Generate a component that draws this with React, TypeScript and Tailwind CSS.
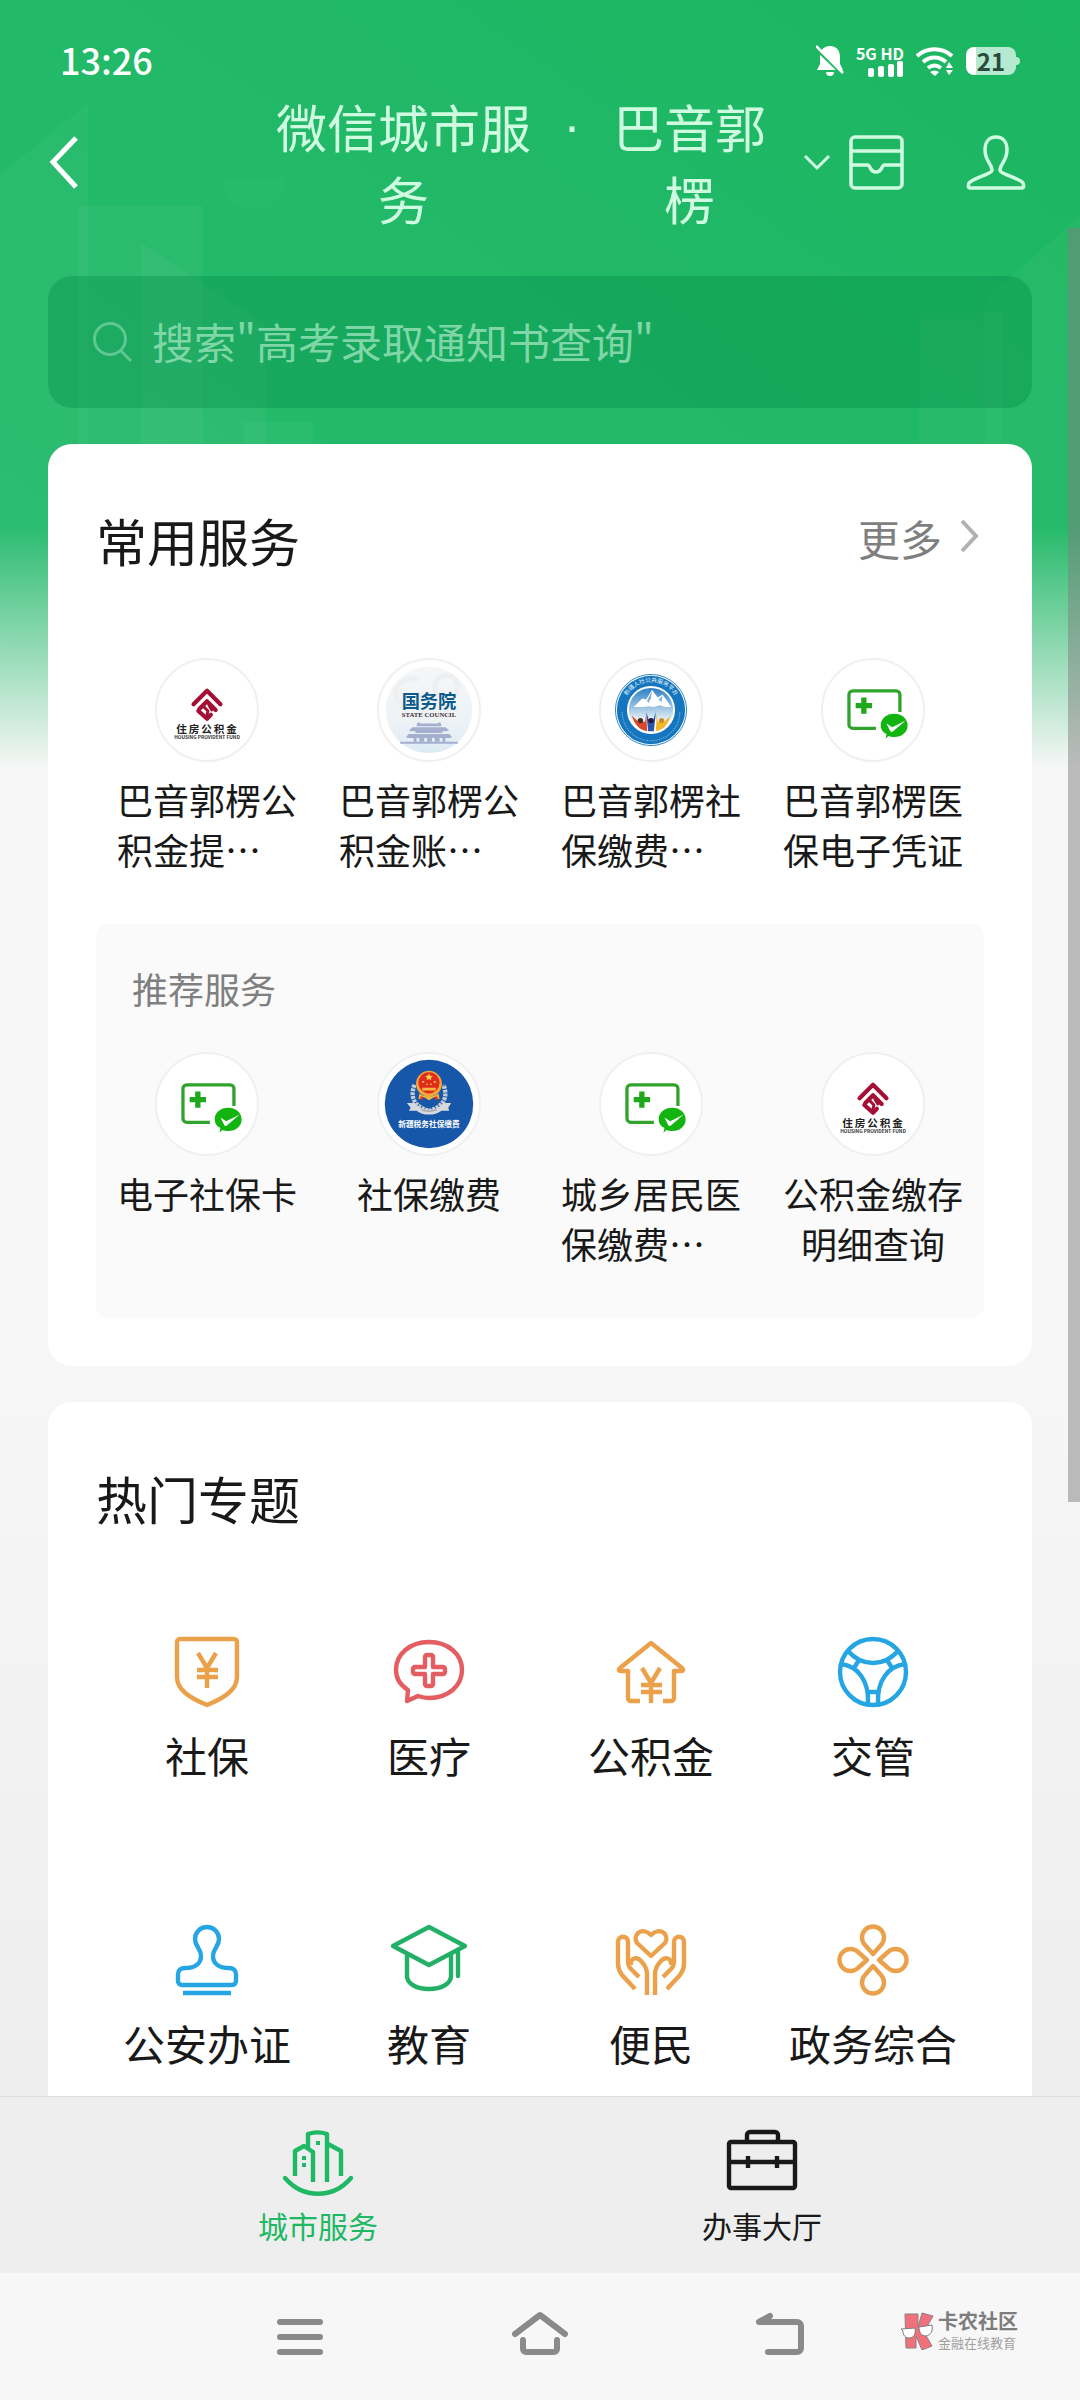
import React, { useState } from "react";

interface IconProps {
  className?: string;
}

interface Service {
  name: string;
  logo: React.ReactNode;
  truncated?: boolean;
}

interface Topic {
  name: string;
  icon: React.ReactNode;
}

const YEN = (
  <>
    <path d="M33 23l9 15 9-15M42 38v20M32 40h21M32 47h21" strokeLinecap="butt" />
  </>
);

/* ---------- service logos, all on a 104 grid ---------- */

function HousingFundLogo() {
  return (
    <svg viewBox="0 0 104 104" className="w-full h-full">
      <g fill="none" stroke="#a50f35" strokeWidth="4.4" strokeLinecap="round" strokeLinejoin="round">
        <path d="M38 46l14-14 14 14" />
        <path d="M44 51l8-8 9 9" />
        <path d="M43 53l9 8 4-4" />
        <path d="M49 49l4 4-1 4" strokeWidth="3" />
        <path d="M54 47l3 5" strokeWidth="3" />
      </g>
      <text x="20 33 46 59 72" y="76" fontSize="11" fontWeight="700" fill="#222">住房公积金</text>
      <text x="52" y="82" fontSize="5" fontWeight="700" fill="#333" textAnchor="middle">HOUSING PROVIDENT FUND</text>
    </svg>
  );
}

function StateCouncilLogo() {
  return (
    <svg viewBox="0 0 104 104" className="w-full h-full">
      <defs>
        <linearGradient id="council" x1="0" y1="0" x2="0" y2="1">
          <stop offset="0" stopColor="#f5f6f7" />
          <stop offset="0.6" stopColor="#eff3f6" />
          <stop offset="1" stopColor="#dcebf4" />
        </linearGradient>
      </defs>
      <circle cx="52" cy="52" r="45" fill="url(#council)" />
      <g fill="none" stroke="#edeff1" strokeWidth="5">
        <path d="M40 22c-8-6-20 0-22 10s6 18 16 17" />
        <circle cx="70" cy="28" r="12" />
      </g>
      <text x="52" y="50" fontSize="19" fontWeight="700" fill="#0b5a8a" textAnchor="middle">国务院</text>
      <text x="52" y="59" fontSize="7" fontWeight="700" fill="#3d2f35" textAnchor="middle" className="font-['Liberation_Serif',serif]">STATE COUNCIL</text>
      <g fill="#a3afcd">
        <path d="M40 65h2l1 1h18l1-1h2l1 4h-26zM35 70h34l4 3-3 1H34l-3-1zM38 74h28v2H38zM31 77h42l3 3-2 1H30l-2-1zM22 85h60v2H22z" />
        <path d="M36 81h3v4h-3zM42 81h5v4h-5zM50 81h5v4h-5zM58 81h5v4h-5zM66 81h3v4h-3z" />
      </g>
    </svg>
  );
}

function SocialSecurityLogo() {
  return (
    <svg viewBox="0 0 104 104" className="w-full h-full">
      <defs>
        <linearGradient id="sky" x1="0" y1="0" x2="0" y2="1">
          <stop offset="0" stopColor="#2a7fc4" />
          <stop offset="0.5" stopColor="#a9cce6" />
          <stop offset="0.8" stopColor="#fff" />
        </linearGradient>
        <path id="ring-top" d="M23 52a29 29 0 0 1 58 0" />
      </defs>
      <circle cx="52" cy="52" r="37" fill="#fff" stroke="#2b82c3" strokeWidth="1" />
      <circle cx="52" cy="52" r="35.5" fill="#1476bf" />
      <circle cx="52" cy="52" r="25" fill="#fff" />
      <circle cx="52" cy="52" r="23" fill="url(#sky)" />
      <path d="M34 49l9-9 4 1 6-10 6 8 5-3 9 13-6 0-6-2-6 2-5-1-6 1z" fill="#fff" />
      <path d="M48 42l5-10-1 8-3 5zM60 41l4-4-1 7z" fill="#7fb2da" />
      <path d="M32 58l8 7 6-1 1-8 1 18c-8-1-13-7-16-16z" fill="#d9482b" />
      <path d="M47 54l3 9h4l3-9-2 20h-6z" fill="#2956a8" />
      <path d="M58 56l1 8 6 1 7-7c-2 9-7 15-15 16z" fill="#f2b829" />
      <circle cx="41" cy="63" r="2.8" fill="#4b2c20" />
      <circle cx="52" cy="63" r="2.8" fill="#2d1440" />
      <circle cx="63" cy="63" r="2.8" fill="#c98b2c" />
      <text fontSize="6" fill="#e6f2fb" textAnchor="middle">
        <textPath href="#ring-top" startOffset="50%">新疆人社公共服务平台</textPath>
      </text>
      <path d="M22 54a30 30 0 0 0 60 0" fill="none" stroke="#6fabd8" strokeWidth="1.2" strokeDasharray="1.5 1" />
    </svg>
  );
}

function MedicalCardLogo() {
  return (
    <svg viewBox="0 0 104 104" className="w-full h-full">
      <path d="M55 71H31a4 4 0 0 1-4-4V36a4 4 0 0 1 4-4h45a4 4 0 0 1 4 4v18" fill="none" stroke="#2fa32b" strokeWidth="3.4" />
      <path d="M42.500 39v17M34 47.500h17" stroke="#1fa81c" strokeWidth="5.500" />
      <path d="M74 56c8 0 14 5 14 12s-6 12-14 12c-2 0-4 0-6-1l-3 3 1-5c-4-2-6-5-6-9 0-7 6-12 14-12z" fill="#12b40f" />
      <path d="M66 66l6 4 14-7-13 11c-1 1-2 1-3 0z" fill="#fff" />
    </svg>
  );
}

function TaxLogo() {
  return (
    <svg viewBox="0 0 104 104" className="w-full h-full">
      <circle cx="52" cy="52" r="46" fill="#1657a9" />
      <path d="M37 32c-5 12-1 23 15 27 16-4 20-15 15-27" fill="none" stroke="#c9ccd2" strokeWidth="4.500" strokeDasharray="3 1" />
      <path d="M29 51l8 0c4 5 9 7 15 7s11-2 15-7l8 0-3 5 1 3-8 0c-4 3-8 4-13 4s-9-1-13-4l-8 0 2-3z" fill="#d7d9de" />
      <path d="M44 58c5 2 11 2 16 0" stroke="#8b909b" fill="none" />
      <circle cx="52" cy="31" r="13.500" fill="#f0a63a" />
      <circle cx="52" cy="30" r="11" fill="#e02b1d" />
      <path d="M52 20l1.200 2.500 2.800.3-2 1.900.5 2.700-2.500-1.300-2.500 1.300.5-2.700-2-1.900 2.800-.3z" fill="#fbd34a" />
      <path d="M45 28h2v2h-2zM57 28h2v2h-2zM49 31h2v1h-2zM53 31h2v1h-2z" fill="#fbd34a" />
      <path d="M45 35h14v3H45zM42 41c4 4 16 4 20 0l1 6-6-2-5 3-5-3-6 2z" fill="#f5b83d" />
      <path d="M43 44l4 1-3 4zM61 44l-4 1 3 4z" fill="#e02b1d" />
      <text x="52" y="76" fontSize="8" fontWeight="700" fill="#fff" textAnchor="middle">新疆税务社保缴费</text>
    </svg>
  );
}

/* ---------- line icons, all on an 84 grid ---------- */

function LineIcon({ className = "", children }: IconProps & { children: React.ReactNode }) {
  return (
    <svg
      viewBox="0 0 84 84"
      fill="none"
      stroke="currentColor"
      strokeWidth="4.4"
      strokeLinecap="round"
      strokeLinejoin="round"
      className={`w-[84px] h-[84px] ${className}`}
    >
      {children}
    </svg>
  );
}

const COMMON: Service[] = [
  { name: "巴音郭楞公积金提…", logo: <HousingFundLogo />, truncated: true },
  { name: "巴音郭楞公积金账…", logo: <StateCouncilLogo />, truncated: true },
  { name: "巴音郭楞社保缴费…", logo: <SocialSecurityLogo />, truncated: true },
  { name: "巴音郭楞医保电子凭证", logo: <MedicalCardLogo /> }
];

const RECOMMENDED: Service[] = [
  { name: "电子社保卡", logo: <MedicalCardLogo /> },
  { name: "社保缴费", logo: <TaxLogo /> },
  { name: "城乡居民医保缴费…", logo: <MedicalCardLogo />, truncated: true },
  { name: "公积金缴存明细查询", logo: <HousingFundLogo /> }
];

const TOPICS: Topic[] = [
  {
    name: "社保",
    icon: (
      <LineIcon className="text-[#eba04a]">
        <path d="M15 9h54a3 3 0 0 1 3 3v35c0 13-13 21-30 28-17-7-30-15-30-28V12a3 3 0 0 1 3-3z" />
        {YEN}
      </LineIcon>
    )
  },
  {
    name: "医疗",
    icon: (
      <LineIcon className="text-[#e35d61]">
        <path d="M42 12c19 0 33 12 33 28S61 68 42 68c-4 0-8-1-11-2l-11 5 1-11C13 55 9 48 9 40c0-16 14-28 33-28z" />
        <path d="M40 25h4a2 2 0 0 1 2 2v10h10a2 2 0 0 1 2 2v3a2 2 0 0 1-2 2H46v10a2 2 0 0 1-2 2h-4a2 2 0 0 1-2-2V44H28a2 2 0 0 1-2-2v-3a2 2 0 0 1 2-2h10V27a2 2 0 0 1 2-2z" />
      </LineIcon>
    )
  },
  {
    name: "公积金",
    icon: (
      <LineIcon className="text-[#eba04a]">
        <path d="M31 71h-9a3 3 0 0 1-3-3V41h-7c-2 0-3-1-1-3l31-25 31 25c2 2 1 3-1 3h-7v27a3 3 0 0 1-3 3h-8" strokeLinecap="butt" />
        <g transform="translate(0 15)">{YEN}</g>
      </LineIcon>
    )
  },
  {
    name: "交管",
    icon: (
      <LineIcon className="text-[#25a5e3]">
        <circle cx="42" cy="42" r="33" />
        <path d="M17 21c7 8 16 12 25 12s18-4 25-12M10 34c17 2 28 17 27 39M74 34c-17 2-28 17-27 39M28 30l-5 8M56 30l5 8M37 62h10" strokeLinecap="butt" />
      </LineIcon>
    )
  },
  {
    name: "公安办证",
    icon: (
      <LineIcon className="text-[#25a5e3]">
        <path d="M17 67h50a4 4 0 0 0 4-4V56c0-4-3-6-7-6-11 0-16-5-16-12 0-8 6-9 6-17a12 12 0 0 0-24 0c0 8 6 9 6 17 0 7-5 12-16 12-4 0-7 2-7 6v7a4 4 0 0 0 4 4z" />
        <path d="M18 75h48" strokeLinecap="butt" />
      </LineIcon>
    )
  },
  {
    name: "教育",
    icon: (
      <LineIcon className="text-[#22b066]">
        <path d="M42 9l36 19-36 19L6 28zM20 36v22c0 8 10 13 22 13s22-5 22-13V36M71 33v25" />
      </LineIcon>
    )
  },
  {
    name: "便民",
    icon: (
      <LineIcon className="text-[#eba04a]">
        <path d="M42 38L28 25c-2-3-2-7 1-10 4-3 9-2 13 2 4-4 9-5 13-2 3 3 3 7 1 10z" />
        <path
          d="M26 71L13 57c-3-4-4-7-4-11V24c0-7 10-7 10 0v19c0 3 1 6 3 8l8 8M22 47c-1-7 6-9 10-4 4 4 6 8 6 13v21M58 71l13-14c3-4 4-7 4-11V24c0-7-10-7-10 0v19c0 3-1 6-3 8l-8 8M62 47c1-7-6-9-10-4-4 4-6 8-6 13v21"
          strokeLinecap="butt"
        />
      </LineIcon>
    )
  },
  {
    name: "政务综合",
    icon: (
      <LineIcon className="text-[#eba04a]">
        <path d="M42 36l-8-9a11 11 0 1 1 16 0zM42 48l-8 9a11 11 0 1 0 16 0zM36 42l-9-8a11 11 0 1 0 0 16zM48 42l9-8a11 11 0 1 1 0 16z" />
      </LineIcon>
    )
  }
];

const TABS: Topic[] = [
  {
    name: "城市服务",
    icon: (
      <LineIcon>
        <path d="M9 57c18 21 48 21 66 0" />
        <path d="M19 55V30l9-5 9 6v30M32 27V13c6-2 13-2 19 0v48M52 23l13 7v25" strokeLinecap="butt" />
        <path d="M40 20h4v4h-4zM26 35h4v4h-4zM26 42h4v4h-4z" fill="currentColor" stroke="none" />
      </LineIcon>
    )
  },
  {
    name: "办事大厅",
    icon: (
      <LineIcon>
        <path d="M11 21h62a2 2 0 0 1 2 2v42a2 2 0 0 1-2 2H11a2 2 0 0 1-2-2V23a2 2 0 0 1 2-2zM9 41h66M27 20v-6a3 3 0 0 1 3-3h25a3 3 0 0 1 3 3v6" />
        <path d="M28 35v12M57 35v12" strokeLinecap="butt" />
      </LineIcon>
    )
  }
];

function StatusBar() {
  return (
    <div className="flex items-center justify-between h-[90px] pt-8 px-15">
      <span className="pb-1 text-4xl leading-9 font-medium">13:26</span>
      <div className="flex items-center gap-3">
        <svg viewBox="0 0 28 32" className="w-7 h-8" fill="currentColor">
          <path d="M14 1c7 0 10 5 10 11v7l3 6H1l3-6v-7C4 6 7 1 14 1zM10 27h8a4 4 0 0 1-8 0z" />
          <path d="M-1 3l28 27" stroke="#22b867" strokeWidth="3" />
          <path d="M0 1l27 27" stroke="currentColor" strokeWidth="2.500" />
        </svg>
        <div className="flex flex-col items-end">
          <span className="text-base leading-4 font-bold">5G HD</span>
          <svg viewBox="0 0 36 16" className="w-9 h-4" fill="currentColor">
            <rect x="0" y="7" width="6" height="9" rx="2" />
            <rect x="10" y="5" width="6" height="11" rx="2" />
            <rect x="20" y="3" width="6" height="13" rx="2" />
            <rect x="29" y="0" width="6" height="16" rx="2" />
          </svg>
        </div>
        <svg viewBox="0 0 38 30" className="w-[38px] h-[30px]" fill="none" stroke="currentColor" strokeWidth="4">
          <path d="M1 10c10-9 25-9 35 0M7 16c7-6 16-6 23 0M12 22c4-3 9-3 13 0" />
          <path d="M14 26c3-2 6-2 9 0l-4 4z" fill="currentColor" stroke="none" />
          <path d="M30 22l3-6 4 6zM30 24h7l-4 5z" fill="currentColor" stroke="none" />
        </svg>
        <div className="flex items-center">
          <div className="flex items-center justify-center w-[50px] h-7 rounded-lg bg-gradient-to-r from-white from-20% to-[#b5ead0] to-20% text-[#2c4a3b] text-2xl font-bold">
            21
          </div>
          <div className="w-1 h-2 rounded-r bg-[#b5ead0]" />
        </div>
      </div>
    </div>
  );
}

function HeaderBackdrop() {
  return (
    <div className="absolute inset-x-0 top-0 h-[768px] overflow-hidden">
      <div className="absolute inset-0 bg-linear-to-tr from-[#28bb6f] via-[#22b969] to-[#1bb661]" />
      <svg viewBox="0 0 1080 768" className="absolute inset-0 w-full h-full" preserveAspectRatio="none" fill="#fff">
        <path d="M0 175L88 103V768H0z" opacity="0.03" />
        <path d="M78 206h125v562H78z" opacity="0.04" />
        <path d="M141 243l125 82v443H141z" opacity="0.04" />
        <path d="M244 422h69v346h-69z" opacity="0.03" />
        <path d="M222 178a32 32 0 1 0 64 0z" opacity="0.02" />
        <path d="M1080 215l-95 85v468h95z" opacity="0.03" />
        <path d="M919 313h83v455h-83z" opacity="0.03" />
      </svg>
      <div className="absolute inset-x-0 bottom-0 h-[240px] bg-gradient-to-b from-[#f7f7f7]/0 to-[#f7f7f7]" />
    </div>
  );
}

function ServiceGrid({ services }: { services: Service[] }) {
  return (
    <div className="grid grid-cols-4">
      {services.map((service) => (
        <a key={service.name} href="#" className="flex flex-col items-center">
          <span className="w-[104px] h-[104px] rounded-full border-2 border-[#f0f0f0] bg-white">{service.logo}</span>
          <span
            className={`mt-3 w-[180px] h-[100px] text-4xl leading-[50px] text-[#191919] ${
              service.truncated ? "text-left" : "text-center"
            }`}
          >
            {service.name}
          </span>
        </a>
      ))}
    </div>
  );
}

export default function App() {
  const [keyword, setKeyword] = useState("");
  const [activeTab, setActiveTab] = useState(0);

  return (
    <div
      lang="zh-CN"
      className="relative flex flex-col min-h-screen bg-gradient-to-b from-[#f7f7f7] from-55% to-[#ededed] to-90% font-['Noto_Sans_CJK_SC',sans-serif]"
    >
      <HeaderBackdrop />

      <header className="relative text-white">
        <StatusBar />
        <div className="flex items-center px-12">
          <button aria-label="返回">
            <svg viewBox="0 0 36 60" className="w-9 h-15" fill="none" stroke="currentColor" strokeWidth="5">
              <path d="M28 6L5 30l23 25" />
            </svg>
          </button>
          <div className="flex flex-1 items-start justify-end text-[51px] leading-[72px] text-[#cffbe1]">
            <h1 className="w-[255px] text-center">微信城市服务</h1>
            <span className="w-[82px] text-center font-['Liberation_Sans',sans-serif]">·</span>
            <button className="flex items-center">
              <span className="w-[153px] text-center">巴音郭楞</span>
              <svg viewBox="0 0 48 48" className="w-12 h-12 ml-[26px]" fill="none" stroke="currentColor" strokeWidth="3">
                <path d="M13 18l12 12 12-12" />
              </svg>
            </button>
          </div>
          <button aria-label="卡包" className="mr-12 text-[#cffbe1]">
            <svg viewBox="0 0 72 72" className="w-18 h-18" fill="none" stroke="currentColor" strokeWidth="3.500" strokeLinejoin="round">
              <rect x="11" y="11" width="51" height="51" rx="4" />
              <path d="M11 25h51M11 39h17c2 0 2 7 8 7s6-7 8-7h18" />
            </svg>
          </button>
          <button aria-label="我的" className="text-[#cffbe1]">
            <svg viewBox="0 0 72 72" className="w-18 h-18" fill="none" stroke="currentColor" strokeWidth="3.500" strokeLinejoin="round">
              <path d="M36 11c7 0 11 5 11 13 0 11-7 14-7 20 0 4 19 8 23 13 1 3 1 5-1 5H10c-2 0-2-2-1-5 4-5 23-9 23-13 0-6-7-9-7-20 0-8 4-13 11-13z" />
            </svg>
          </button>
        </div>

        <div className="flex items-center h-[132px] mt-[42px] mx-12 px-11 rounded-3xl bg-[#008a45]/35">
          <svg viewBox="0 0 40 40" className="w-10 h-10 mr-5 text-[#5fc791]" fill="none" stroke="currentColor" strokeWidth="3">
            <circle cx="18" cy="17" r="15.500" />
            <path d="M28 28l11 11" />
          </svg>
          <input
            type="text"
            aria-label="搜索"
            value={keyword}
            onChange={(e) => setKeyword(e.target.value)}
            placeholder={'搜索"高考录取通知书查询"'}
            className="flex-1 h-full pb-1 bg-transparent outline-none text-[42px] placeholder:text-[#7fd6a6]"
          />
        </div>
      </header>

      <main className="relative flex flex-col flex-1 px-12 pt-9 gap-9">
        <section className="p-12 rounded-3xl bg-white">
          <div className="flex items-center justify-between">
            <h2 className="text-[51px] leading-[96px] text-[#191919]">常用服务</h2>
            <a href="#" className="flex items-center pb-1 text-[42px] leading-[60px] text-[#7f7f7f]">
              更多
              <svg viewBox="0 0 24 36" className="w-6 h-9 ml-[18px] text-[#b2b2b2]" fill="none" stroke="currentColor" strokeWidth="4">
                <path d="M2 1l14 15L2 31" />
              </svg>
            </a>
          </div>
          <div className="mt-[70px]">
            <ServiceGrid services={COMMON} />
          </div>
          <div className="mt-[50px] pt-10 pb-[50px] rounded-xl bg-[#fafafa]">
            <h3 className="px-9 mb-10 text-4xl leading-[48px] text-[#7f7f7f]">推荐服务</h3>
            <ServiceGrid services={RECOMMENDED} />
          </div>
        </section>

        <section className="flex-1 px-12 pt-12 pb-6 rounded-t-3xl bg-white">
          <h2 className="text-[51px] leading-[96px] text-[#191919]">热门专题</h2>
          <div className="grid grid-cols-4 gap-y-[134px] mt-[84px]">
            {TOPICS.map((topic) => (
              <a key={topic.name} href="#" className="flex flex-col items-center">
                {topic.icon}
                <span className="mt-3 text-[42px] leading-[58px] text-[#191919]">{topic.name}</span>
              </a>
            ))}
          </div>
        </section>
      </main>

      <nav className="relative grid grid-cols-2 px-24 border-t border-[#dcdcdc] bg-[#eeeeee]">
        {TABS.map((tab, idx) => (
          <button
            key={tab.name}
            onClick={() => setActiveTab(idx)}
            className={`flex flex-col items-center pt-6 pb-7 ${activeTab === idx ? "text-[#1fb864]" : "text-[#191919]"}`}
          >
            {tab.icon}
            <span className="text-3xl leading-10">{tab.name}</span>
          </button>
        ))}
      </nav>

      {/* system navigation */}
      <footer className="relative grid grid-cols-3 items-center justify-items-center h-[127px] px-[180px] bg-[#f7f7f7] text-[#8a8a8a]">
        <button aria-label="菜单">
          <svg viewBox="0 0 72 72" className="w-18 h-18" fill="none" stroke="currentColor" strokeWidth="6" strokeLinecap="round">
            <path d="M16 21h40M16 36h40M16 51h40" />
          </svg>
        </button>
        <button aria-label="主页">
          <svg viewBox="0 0 72 72" className="w-18 h-18" fill="none" stroke="currentColor" strokeWidth="6" strokeLinecap="round" strokeLinejoin="round">
            <path d="M11 33l25-19 25 19M19 39v9a3 3 0 0 0 3 3h28a3 3 0 0 0 3-3v-9" />
          </svg>
        </button>
        <button aria-label="后退">
          <svg viewBox="0 0 72 72" className="w-18 h-18" fill="none" stroke="currentColor" strokeWidth="6" strokeLinecap="round" strokeLinejoin="round">
            <path d="M26 15l-11 6h38a4 4 0 0 1 4 4v22a4 4 0 0 1-4 4H24" />
          </svg>
        </button>
        <div className="absolute right-[62px] top-9 flex items-center gap-1">
          <svg viewBox="0 0 34 38" className="w-[34px] h-[38px]">
            <path d="M5 2h13v13l4-14 11 3-9 16 8 14-10 4-6-14v12H6z" fill="#f0707c" stroke="#8d7f82" />
            <g fill="#fff" stroke="#7c7c7c">
              <path d="M1 17l14-1c1 6-1 10-6 10-4 0-6-3-6-7z" />
              <path d="M19 15l13-2c1 6-1 10-6 11-5 0-7-4-7-9z" />
            </g>
          </svg>
          <div className="flex flex-col text-[#7d7d7d]">
            <span className="text-xl leading-6 font-bold">卡农社区</span>
            <span className="text-[13px] leading-5 text-[#a0a0a0]">金融在线教育</span>
          </div>
        </div>
      </footer>

      <div className="absolute right-0 top-[228px] w-3 h-[1274px] bg-[#808080]/50" />
    </div>
  );
}
